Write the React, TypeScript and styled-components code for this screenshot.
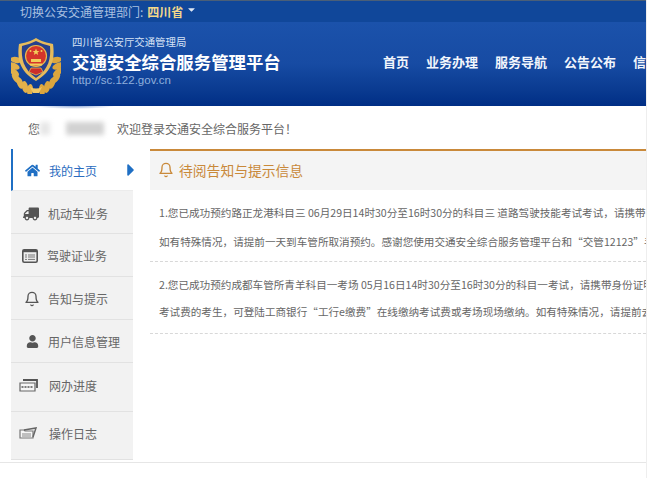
import styled, { createGlobalStyle } from 'styled-components';
import { FaHome, FaTruck, FaUser, FaCaretRight, FaCaretDown } from 'react-icons/fa';
import { FiBell } from 'react-icons/fi';

const Global = createGlobalStyle`
  html, body { margin: 0; padding: 0; background: #fff; }
  body { font-family: "Noto Sans CJK SC", "Liberation Sans", sans-serif; overflow: hidden; }
`;

const Page = styled.div`
  width: 646px;
  height: 478px;
  overflow: hidden;
  border-right: 1px solid #eee;
`;

const TopBar = styled.div`
  height: 21px;
  border-top: 1px solid #4a5f78;
  background: #10479a;
  padding-left: 20px;
  display: flex;
  align-items: center;
  font-size: 12px;
  color: #a9c0e0;
`;

const Province = styled.b`
  color: #f3d88a;
  margin-left: 4px;
  font-size: 12px;
`;

const Header = styled.header`
  box-sizing: border-box;
  height: 84px;
  background: linear-gradient(#1b52ab 0%, #174ba3 50%, #0a3b91 80%, #002e85 100%);
  display: flex;
  align-items: center;
  padding: 0 0 6px 11px;
  white-space: nowrap;
  overflow: hidden;
`;

const Brand = styled.div`
  display: flex;
  flex-direction: column;
  margin-left: 11px;
  width: 311px;
  flex: none;
`;

const Bureau = styled.div`
  font-size: 10.4px;
  line-height: 12px;
  margin-bottom: 2px;
  color: #d6e2f5;
`;

const Title = styled.div`
  font-size: 17.4px;
  line-height: 24px;
  font-weight: 700;
  color: #fff;
`;

const Url = styled.div`
  font-family: "Liberation Sans", sans-serif;
  font-size: 11.5px;
  line-height: 12px;
  color: #8fb0dc;
`;

const Nav = styled.nav`
  display: flex;
  gap: 17px;
  font-size: 13px;
  font-weight: 700;
  color: #f2f6fc;
`;

const Welcome = styled.div`
  box-sizing: border-box;
  height: 43px;
  display: flex;
  align-items: center;
  padding: 2px 0 0 28px;
  font-size: 12px;
  color: #666;
  position: relative;
  &::before {
    content: "";
    position: absolute;
    left: 35px;
    top: 0;
    width: 80px;
    height: 3px;
    background: radial-gradient(ellipse at top, #8fa9d6, rgba(255, 255, 255, 0) 70%);
  }
`;

const Blur = styled.span<{ $w: number; $gap: number; $tone: string }>`
  width: ${p => p.$w}px;
  margin-right: ${p => p.$gap}px;
  height: 13px;
  background: ${p => p.$tone};
  filter: blur(2.5px);
`;

const Main = styled.div`
  display: flex;
  align-items: flex-start;
  padding-left: 11px;
  height: 313px;
  border-bottom: 1px solid #e6e6e6;
`;

const Side = styled.aside`
  width: 122px;
  flex: none;
`;

const Item = styled.div<{ $active?: boolean; $h: number; $pad: number; $gap: number; $pt: number; $pb: number }>`
  box-sizing: border-box;
  height: ${p => p.$h}px;
  display: flex;
  align-items: center;
  gap: ${p => p.$gap}px;
  padding: ${p => p.$pt}px 0 ${p => p.$pb}px ${p => p.$pad}px;
  font-size: 12px;
  color: ${p => (p.$active ? '#2a6cc0' : '#666')};
  background: ${p => (p.$active ? '#fff' : '#f2f2f2')};
  border-left: ${p => (p.$active ? '2px solid #1f6fc4' : '0')};
  border-bottom: 1px solid ${p => (p.$active ? '#ececec' : '#e2e2e2')};
  svg { flex: none; }
`;

const Arrow = styled.span`
  margin-left: auto;
  margin-right: -8px;
  color: #1f6fc4;
  display: flex;
`;

const Content = styled.section`
  margin-left: 17px;
  flex: 1;
  min-width: 0;
  overflow: hidden;
`;

const NoticeHead = styled.div`
  border-top: 2px solid #c9893a;
  background: #f4f4f4;
  display: flex;
  align-items: center;
  gap: 5px;
  padding: 0 0 2px 8px;
  box-sizing: border-box;
  height: 41px;
  font-size: 13.8px;
  color: #c9893a;
`;

const Notice = styled.div<{ $lh: number; $pt: number; $pb: number }>`
  padding: ${p => p.$pt}px 0 ${p => p.$pb}px 9px;
  border-bottom: 1px dashed #d8d8d8;
  font-size: 10.6px;
  line-height: ${p => p.$lh}px;
  color: #666;
  white-space: nowrap;
`;

const items = [
  { label: '机动车业务', h: 43, pad: 12, gap: 9, pt: 3, pb: 0, icon: <FaTruck size={16} color="#555" style={{ transform: 'scaleX(-1)' }} /> },
  {
    label: '驾驶证业务', h: 43, pad: 11, gap: 9, pt: 1, pb: 0,
    icon: (
      <svg width="16" height="14" viewBox="0 0 16 14">
        <rect x="0.8" y="0.8" width="14.4" height="12.4" rx="1.5" fill="#eee" stroke="#555" strokeWidth="1.6" />
        <rect x="0.8" y="0.8" width="14.4" height="2.4" fill="#555" />
        <path d="M6 6h7M6 8h7M6 10.4h7M3 6h2M3 8h2M3 10.4h2" stroke="#777" strokeWidth="1" />
      </svg>
    ),
  },
  { label: '告知与提示', h: 43, pad: 13, gap: 8, pt: 1, pb: 0, icon: <FiBell size={16} color="#555" /> },
  { label: '用户信息管理', h: 43, pad: 15, gap: 9, pt: 1, pb: 0, icon: <FaUser size={13} color="#555" /> },
  {
    label: '网办进度', h: 49, pad: 8, gap: 11, pt: 0, pb: 3,
    icon: (
      <svg width="19" height="13" viewBox="0 0 19 13">
        <path d="M1 4h15v8H1z" fill="#f6f6f6" stroke="#666" strokeWidth="1.2" />
        <path d="M4 1h14v8" fill="none" stroke="#555" strokeWidth="1.8" />
        <path d="M2.5 8h12" stroke="#555" strokeWidth="1.6" strokeDasharray="2 1" />
      </svg>
    ),
  },
  {
    label: '操作日志', h: 48, pad: 8, gap: 12, pt: 0, pb: 5,
    icon: (
      <svg width="18" height="12" viewBox="0 0 18 12">
        <path d="M1 3h4l1 1h8v7H1z" fill="#f6f6f6" stroke="#777" strokeWidth="1.2" />
        <path d="M5 3l12-2-3 9" fill="none" stroke="#666" strokeWidth="1.5" />
        <path d="M3 7h9M3 9h9" stroke="#888" strokeWidth="1" />
      </svg>
    ),
  },
];

const leaves = [
  [5, 22, 70], [3, 28, 85], [3, 34, 100], [5, 40, 115], [9, 45, 130], [14, 49, 140], [19, 52, 155],
];

const Emblem = () => (
  <svg width="50" height="56" viewBox="0 0 50 56" style={{ flex: 'none', marginTop: 9 }}>
    {leaves.map(([x, y, r]) => (
      <g key={`${x}-${y}`}>
        <ellipse cx={x} cy={y} rx="3" ry="6" fill="#e2b04a" transform={`rotate(${r - 90 - 60} ${x} ${y})`} />
        <ellipse cx={50 - x} cy={y} rx="3" ry="6" fill="#dba63e" transform={`rotate(${150 - r} ${50 - x} ${y})`} />
      </g>
    ))}
    <path d="M25 0c4 3 12 5 17 6 2 14 0 27-17 37C8 33 6 20 8 6c5-1 13-3 17-6z" fill="#e6bb5c" />
    <path d="M25 3c4 2 10 4 14 5 1 12-1 23-14 32C12 31 10 20 11 8c4-1 10-3 14-5z" fill="#27408c" />
    <circle cx="25" cy="18" r="10.5" fill="#d5352b" stroke="#e8b94f" strokeWidth="1.2" />
    <path d="M20 30h10l2 4-7 3-7-3z" fill="#cc2f2a" stroke="#e8b94f" strokeWidth="0.8" />
    <path d="M19 25.5h12v2H19z" fill="#f2cf5a" />
    <path d="M20 21h10v3H20z" fill="#f2cf5a" />
    <path d="M25 10.5l1 2.4 2.4.1-1.9 1.5.7 2.4-2.2-1.4-2.2 1.4.7-2.4-1.9-1.5 2.4-.1z" fill="#f2cf5a" />
    <circle cx="19.5" cy="13" r="1" fill="#f2cf5a" />
    <circle cx="30.5" cy="13" r="1" fill="#f2cf5a" />
    <path d="M19 49c4 2 8 2 12 0l-3 6h-6z" fill="#f0c765" />
  </svg>
);

const App = () => (
  <Page>
    <Global />
    <TopBar>
      切换公安交通管理部门:<Province>四川省</Province>
      <FaCaretDown size={11} color="#dfe8f5" style={{ marginLeft: 3, marginTop: -4 }} />
    </TopBar>
    <Header>
      <Emblem />
      <Brand>
        <Bureau>四川省公安厅交通管理局</Bureau>
        <Title>交通安全综合服务管理平台</Title>
        <Url>http://sc.122.gov.cn</Url>
      </Brand>
      <Nav>
        <span>首页</span>
        <span>业务办理</span>
        <span>服务导航</span>
        <span>公告公布</span>
        <span>信息公开</span>
      </Nav>
    </Header>
    <Welcome>
      <span>您</span>
      <Blur $w={10} $gap={16} $tone="#e6e6e6" />
      <Blur $w={38} $gap={13} $tone="#d2d2d2" />
      <span>欢迎登录交通安全综合服务平台！</span>
    </Welcome>
    <Main>
      <Side>
        <Item $active $h={42} $pad={12} $gap={9} $pt={1} $pb={0}>
          <FaHome size={15} color="#1f6fc4" />
          我的主页
          <Arrow><FaCaretRight size={20} /></Arrow>
        </Item>
        {items.map(it => (
          <Item key={it.label} $h={it.h} $pad={it.pad} $gap={it.gap} $pt={it.pt} $pb={it.pb}>
            {it.icon}
            {it.label}
          </Item>
        ))}
      </Side>
      <Content>
        <NoticeHead>
          <FiBell size={16} />
          待阅告知与提示信息
        </NoticeHead>
        <Notice $lh={29} $pt={8} $pb={5}>
          <div>1.您已成功预约路正龙港科目三 06月29日14时30分至16时30分的科目三 道路驾驶技能考试考试，请携带身份证明</div>
          <div>如有特殊情况，请提前一天到车管所取消预约。感谢您使用交通安全综合服务管理平台和“交管12123”手机</div>
        </Notice>
        <Notice $lh={27} $pt={9} $pb={8}>
          <div>2.您已成功预约成都车管所青羊科目一考场 05月16日14时30分至16时30分的科目一考试，请携带身份证明</div>
          <div>考试费的考生，可登陆工商银行“工行e缴费”在线缴纳考试费或考场现场缴纳。如有特殊情况，请提前去车管所</div>
        </Notice>
      </Content>
    </Main>
  </Page>
);

export default App;
